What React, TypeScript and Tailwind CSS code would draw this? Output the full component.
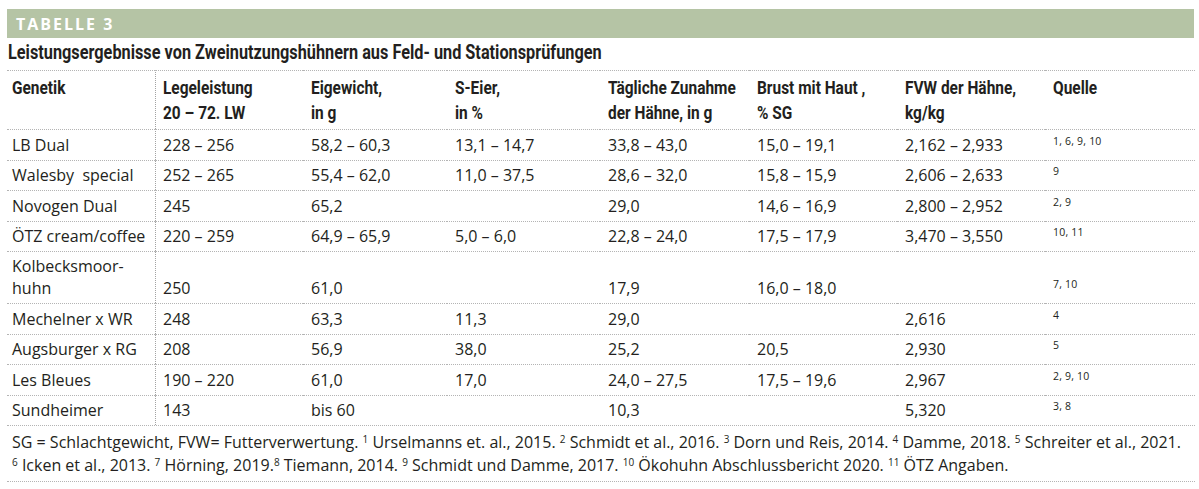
const body = "font-['Open_Sans',_'Liberation_Sans',_sans-serif]"
const cond = "font-['Roboto',_'Liberation_Sans',_sans-serif] font-bold"

const cols = 'grid grid-cols-[148px_148px_144px_153px_149px_148px_148px_1fr]'

const rows: string[][] = [
  ['LB Dual', '228 – 256', '58,2 – 60,3', '13,1 – 14,7', '33,8 – 43,0', '15,0 – 19,1', '2,162 – 2,933', '1, 6, 9, 10'],
  ['Walesby  special', '252 – 265', '55,4 – 62,0', '11,0 – 37,5', '28,6 – 32,0', '15,8 – 15,9', '2,606 – 2,633', '9'],
  ['Novogen Dual', '245', '65,2', '', '29,0', '14,6 – 16,9', '2,800 – 2,952', '2, 9'],
  ['ÖTZ cream/coffee', '220 – 259', '64,9 – 65,9', '5,0 – 6,0', '22,8 – 24,0', '17,5 – 17,9', '3,470 – 3,550', '10, 11'],
  ['Kolbecksmoor-\nhuhn', '250', '61,0', '', '17,9', '16,0 – 18,0', '', '7, 10'],
  ['Mechelner x WR', '248', '63,3', '11,3', '29,0', '', '2,616', '4'],
  ['Augsburger x RG', '208', '56,9', '38,0', '25,2', '20,5', '2,930', '5'],
  ['Les Bleues', '190 – 220', '61,0', '17,0', '24,0 – 27,5', '17,5 – 19,6', '2,967', '2, 9, 10'],
  ['Sundheimer', '143', 'bis 60', '', '10,3', '', '5,320', '3, 8'],
]

const heads: [string, string][] = [
  ['Genetik', ''],
  ['Legeleistung', '20 – 72. LW'],
  ['Eigewicht,', 'in g'],
  ['S-Eier,', 'in %'],
  ['Tägliche Zunahme', 'der Hähne, in g'],
  ['Brust mit Haut ,', '% SG'],
  ['FVW der Hähne,', 'kg/kg'],
  ['Quelle', ''],
]

function cellClass(i: number) {
  // dotted rule on every cell, solid rule left of the second column
  let c = 'border-t border-dotted border-[#b4b4b4] '
  if (i === 0) c += 'pl-[5px] '
  else if (i === 1) c += 'border-l border-l-solid border-l-[#a3a3a3] pl-[7px] '
  else c += 'pl-[8px] '
  return c
}

function Sup({ children }: { children: React.ReactNode }) {
  return <sup className="text-[10px]">{children}</sup>
}

export default function App() {
  return (
    <div className="bg-white w-[1199px] h-[489px] text-[#231f20] overflow-hidden">
      <div className="pt-[9px] pl-[7px] pr-[5px]">
        <div className="h-[29px] bg-[#b5c4a5] flex items-center pl-[9px]">
          <span className="font-['Open_Sans',_sans-serif] font-bold text-white text-[16px] tracking-[2px] leading-none">
            TABELLE 3
          </span>
        </div>

        <h2 className={`${cond} text-[19.5px] leading-[26px] pt-[2px] pb-[4px] pl-[1px] whitespace-nowrap`}>
          <span className="inline-block origin-left scale-x-[0.835]">
            Leistungsergebnisse von Zweinutzungshühnern aus Feld- und Stationsprüfungen
          </span>
        </h2>

        <div className={`${cols} w-[1188px]`}>
          {heads.map(([a, b], i) => (
            <div
              key={i}
              className={`${cellClass(i)} ${cond} text-[18.5px] leading-[25px] pt-[5px] pb-[3px] h-[59px] whitespace-nowrap flex flex-col items-start`}
            >
              <span className="origin-left scale-x-[0.835]">{a}</span>
              {b && <span className="origin-left scale-x-[0.835]">{b}</span>}
            </div>
          ))}

          {rows.map((r, ri) =>
            r.map((v, i) => {
              const tall = r[0].includes('\n')
              const quelle = i === 7
              return (
                <div
                  key={`${ri}-${i}`}
                  className={`${cellClass(i)} ${body} flex flex-col justify-end whitespace-pre ${
                    tall ? 'h-[52px]' : 'h-[30.5px]'
                  } ${quelle ? 'text-[10.5px] leading-[11px] pb-[13px] tracking-[0.2px]' : 'text-[16px] leading-[22px] pb-[4px]'}`}
                >
                  {v.split('\n').map((t, k) => (
                    <div key={k}>{t}</div>
                  ))}
                </div>
              )
            })
          )}
        </div>

        <div
          className={`${body} w-[1188px] border-t border-b border-dotted border-[#b4b4b4] text-[16px] leading-[23px] pt-[5px] pb-[4px] pl-[5px] whitespace-nowrap`}
        >
          SG = Schlachtgewicht, FVW= Futterverwertung. <Sup>1</Sup> Urselmanns et. al., 2015. <Sup>2</Sup> Schmidt et
          al., 2016. <Sup>3</Sup> Dorn und Reis, 2014. <Sup>4</Sup> Damme, 2018. <Sup>5</Sup> Schreiter et al., 2021.
          <br />
          <Sup>6</Sup> Icken et al., 2013. <Sup>7</Sup> Hörning, 2019.<Sup>8</Sup> Tiemann, 2014. <Sup>9</Sup> Schmidt
          und Damme, 2017. <Sup>10</Sup> Ökohuhn Abschlussbericht 2020. <Sup>11</Sup> ÖTZ Angaben.
        </div>
      </div>
    </div>
  )
}
